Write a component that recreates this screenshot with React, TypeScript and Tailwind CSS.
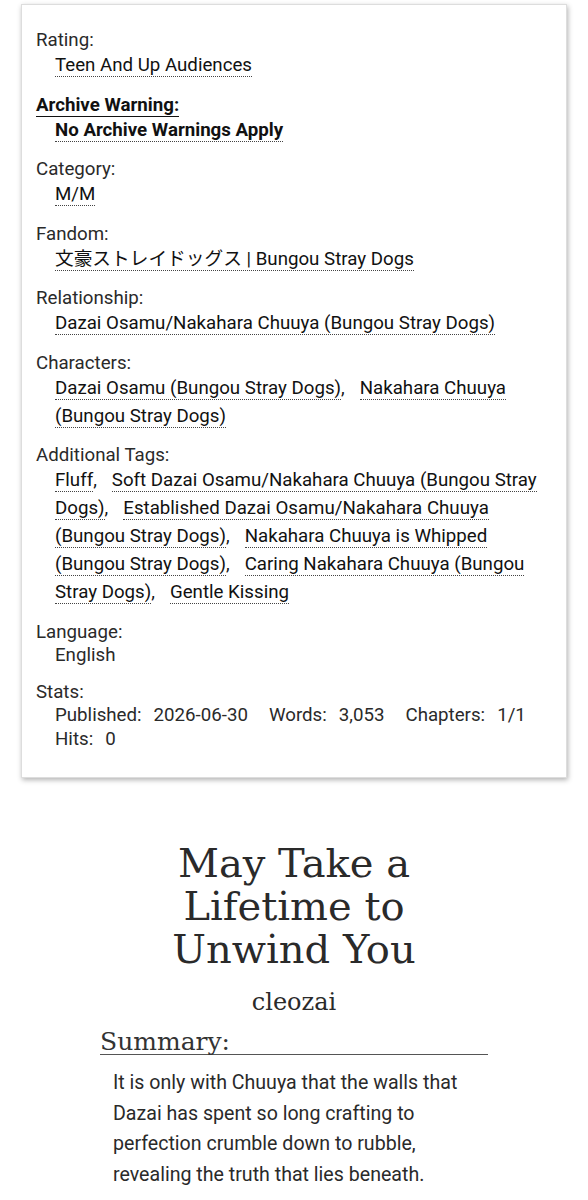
import React from "react";

interface TagGroup {
  label: string;
  tags: string[];
  bold?: boolean;
}

const groups: TagGroup[] = [
  { label: "Rating:", tags: ["Teen And Up Audiences"] },
  { label: "Archive Warning:", tags: ["No Archive Warnings Apply"], bold: true },
  { label: "Category:", tags: ["M/M"] },
  { label: "Fandom:", tags: ["文豪ストレイドッグス | Bungou Stray Dogs"] },
  { label: "Relationship:", tags: ["Dazai Osamu/Nakahara Chuuya (Bungou Stray Dogs)"] },
  {
    label: "Characters:",
    tags: ["Dazai Osamu (Bungou Stray Dogs)", "Nakahara Chuuya (Bungou Stray Dogs)"],
  },
  {
    label: "Additional Tags:",
    tags: [
      "Fluff",
      "Soft Dazai Osamu/Nakahara Chuuya (Bungou Stray Dogs)",
      "Established Dazai Osamu/Nakahara Chuuya (Bungou Stray Dogs)",
      "Nakahara Chuuya is Whipped (Bungou Stray Dogs)",
      "Caring Nakahara Chuuya (Bungou Stray Dogs)",
      "Gentle Kissing",
    ],
  },
];

const stats = [
  { label: "Published:", value: "2026-06-30" },
  { label: "Words:", value: "3,053" },
  { label: "Chapters:", value: "1/1" },
  { label: "Hits:", value: "0" },
];

function TagList({ tags, bold }: { tags: string[]; bold?: boolean }) {
  return (
    <dd className={`pl-[19px] leading-[28px] text-[#111] ${bold ? "font-bold" : ""}`}>
      {tags.map((tag, i) => (
        <span key={tag} className={i < tags.length - 1 ? "mr-[15px]" : ""}>
          <a className="border-b border-dotted border-[#444] cursor-pointer">{tag}</a>
          {i < tags.length - 1 && ","}
        </span>
      ))}
    </dd>
  );
}

export default function App() {
  return (
    <div className="w-[588px] bg-white pb-10 font-['Roboto','Noto_Sans_CJK_JP',sans-serif]">
      {/* Work meta */}
      <dl className="mx-[21px] mt-[4px] border border-[#ddd] bg-white pl-[14px] pr-[22px] pt-[24px] pb-[26px] text-[18.7px] shadow-[1px_2px_5px_rgba(0,0,0,0.3)]">
        {groups.map((g, i) => (
          <div key={g.label} className={i > 0 ? "mt-[14.5px]" : ""}>
            <dt className="leading-[22px] text-[#2a2a2a]">
              {g.bold ? (
                <span className="border-b border-solid border-[#111] font-bold text-[#111]">{g.label}</span>
              ) : (
                g.label
              )}
            </dt>
            <TagList tags={g.tags} bold={g.bold} />
          </div>
        ))}

        <div className="mt-[14.5px]">
          <dt className="leading-[22px] text-[#2a2a2a]">Language:</dt>
          <dd className="pl-[19px] leading-[24px] text-[#2a2a2a]">English</dd>
        </div>

        <div className="mt-[14.5px]">
          <dt className="leading-[22px] text-[#2a2a2a]">Stats:</dt>
          <dd className="flex flex-wrap gap-x-[21px] pl-[19px] leading-[24px] text-[#2a2a2a]">
            {stats.map((s) => (
              <span key={s.label} className="flex gap-x-[12px]">
                <span>{s.label}</span>
                <span>{s.value}</span>
              </span>
            ))}
          </dd>
        </div>
      </dl>

      {/* Preface */}
      <div className="mt-[64px] flex flex-col items-center text-[#2a2a2a]">
        <h2 className="max-w-[300px] text-center font-['DejaVu_Serif',serif] text-[40px] leading-[43px]">
          May Take a Lifetime to Unwind You
        </h2>
        <h3 className="mt-[16px] font-['DejaVu_Serif',serif] text-[24px] leading-[30px]">cleozai</h3>

        <div className="mt-[12px] w-[388px]">
          <h3 className="border-b border-[#555] font-['DejaVu_Serif',serif] text-[25px] leading-[25px] text-[#333]">
            Summary:
          </h3>
          <p className="mt-[13px] pl-[13px] text-[19.6px] leading-[30.7px] text-[#2a2a2a]">
            It is only with Chuuya that the walls that Dazai has spent so long crafting to perfection
            crumble down to rubble, revealing the truth that lies beneath.
          </p>
        </div>
      </div>
    </div>
  );
}
